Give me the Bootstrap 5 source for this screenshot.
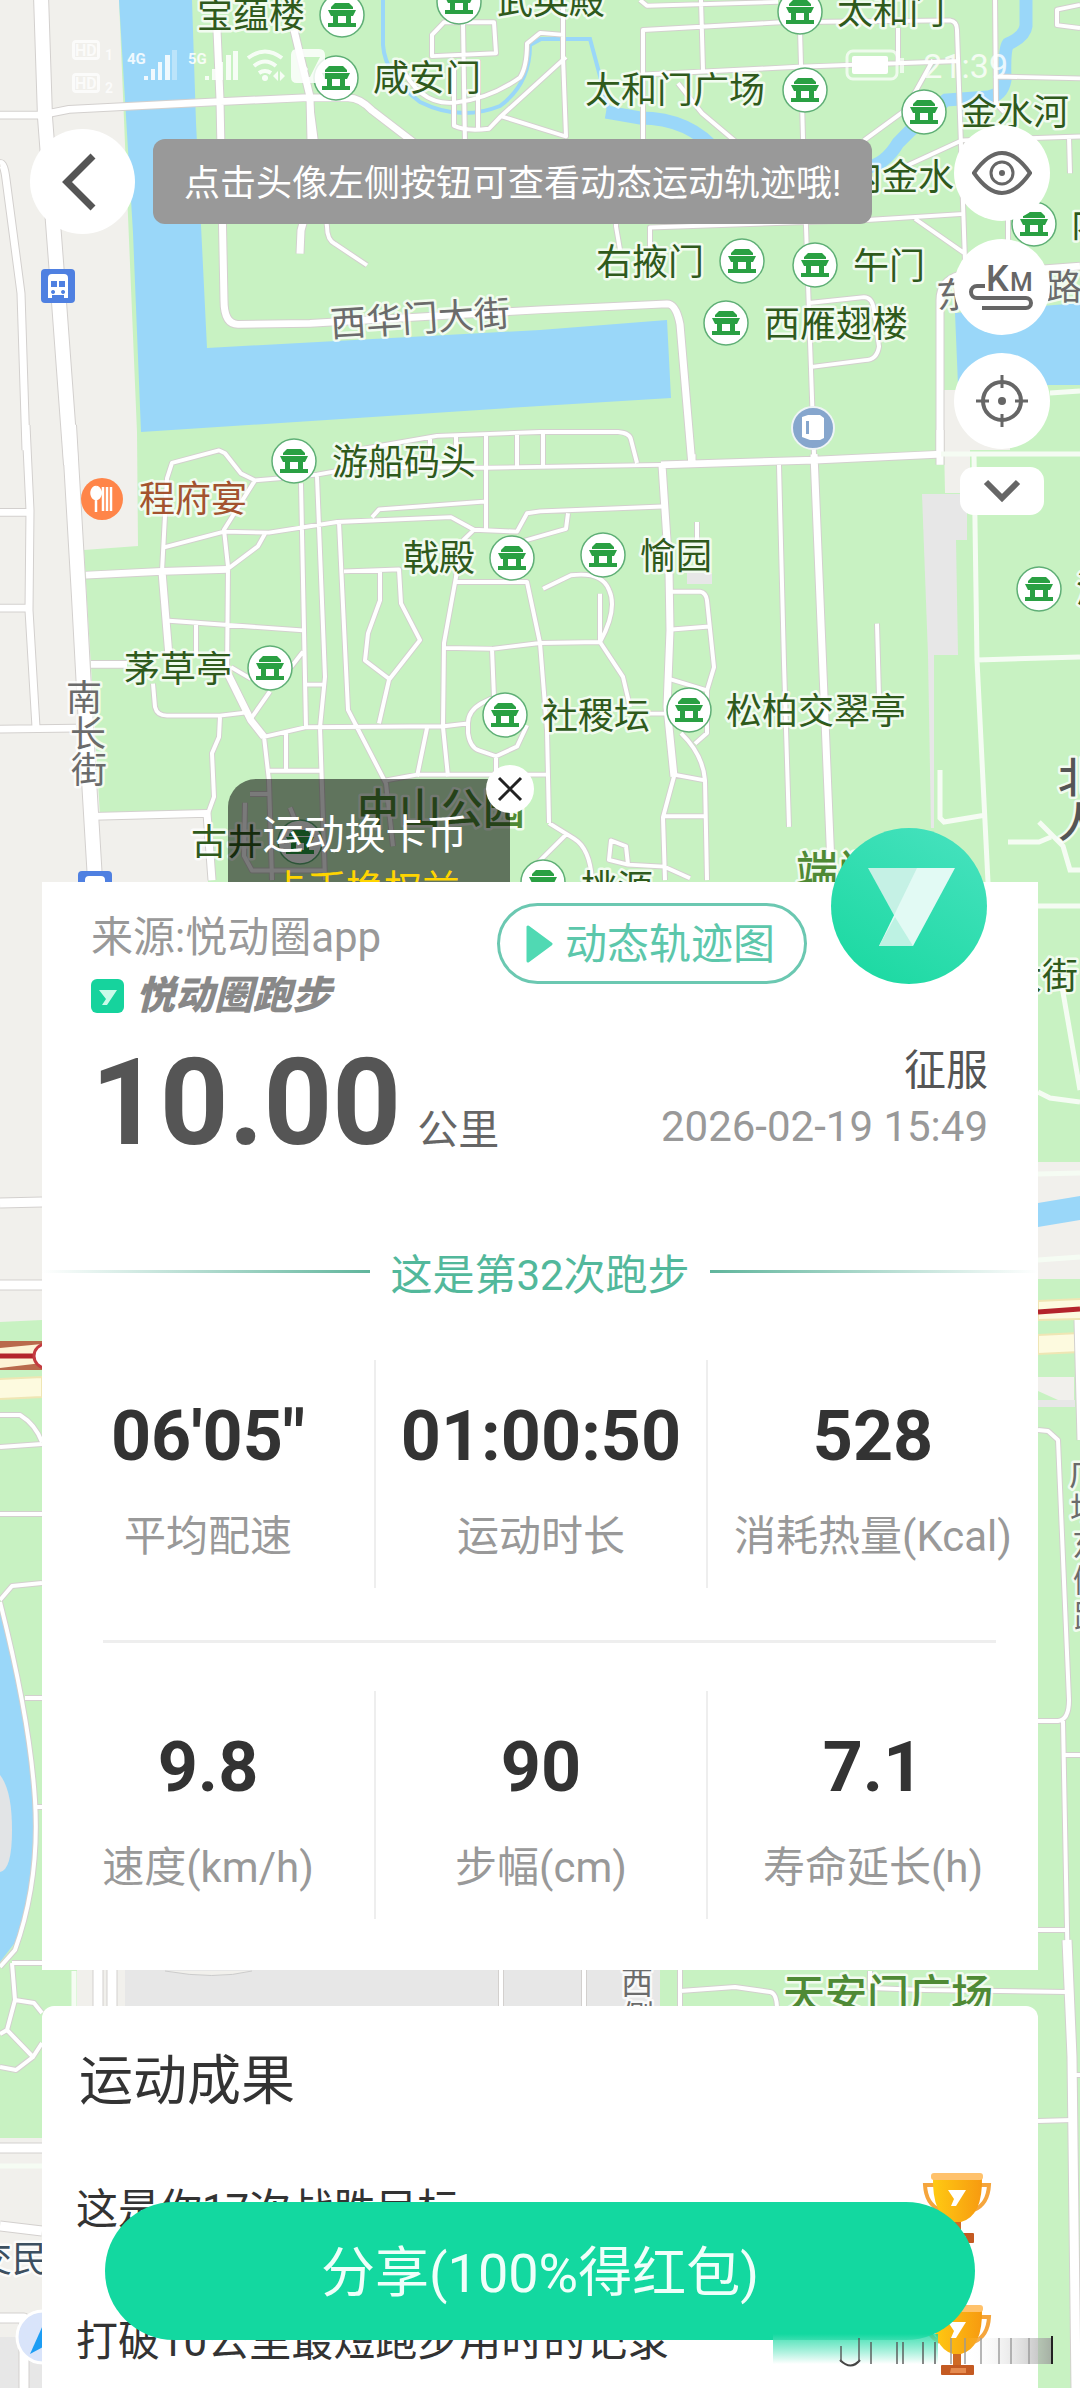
<!DOCTYPE html>
<html lang="zh-CN">
<head>
<meta charset="utf-8">
<meta name="viewport" content="width=device-width, initial-scale=1">
<title>悦动圈跑步</title>
<link href="https://cdn.jsdelivr.net/npm/bootstrap@5.3.0/dist/css/bootstrap.min.css" rel="stylesheet">
<style>
body{font-family:Roboto,"Noto Sans CJK SC",sans-serif;background:#c8f2c2;color:#333;font-size:42px;line-height:60px}
.shell{z-index:0}
.city-map{position:absolute;inset:0;width:100%;height:100%;z-index:-1}
.city-map text{font-family:Roboto,"Noto Sans CJK SC",sans-serif;font-size:36px;fill:#2f5a1c;stroke:#fff;stroke-opacity:.75;stroke-width:5px;paint-order:stroke;stroke-linejoin:round}
.city-map .street{fill:#6b6b6b}
.city-map .lane{font-size:32px;fill:#6b6b6b}
.city-map .area{font-size:42px;font-weight:500;fill:#4f8a35}
.city-map .district{fill:#555}
.city-map .diner{fill:#a3532f}
.city-map .metro{fill:#3c4f60}
.map-zone{min-height:882px}
.status{padding:40px 72px 0;height:125px;color:#fff;font-size:34px}
.status time{line-height:44px;opacity:.8}
.nav-zone{padding:0 30px}
.round-btn{width:96px;height:96px;padding:0;border:0;border-radius:50%;background:#fff;display:flex;align-items:center;justify-content:center}
.back-btn{width:105px;height:105px;margin-top:4px;padding-right:8px}
.tip{background:#999;color:#fff;border-radius:12px;font-size:36px;line-height:54px;padding:18px 31px 13px;margin:14px auto 0 18px;white-space:nowrap}
.tools{gap:18px}
.tools .round-btn:last-child{width:84px;height:48px;border-radius:14px;margin-top:0}
.coin{margin-left:228px;width:282px;height:103px;background:rgba(0,0,0,.52);border-radius:28px 0 0 0;color:#fff;font-size:41px;line-height:60px;padding:26px 8px 0 0;text-align:center;overflow:hidden}
.coin span{display:block}
.coin span+span{color:#ffd500;font-size:38px;line-height:48px}
.coin-close{position:absolute;left:486px;bottom:69px;width:48px;height:48px}
.sheet{margin:0 42px;background:#fff}
.sheet-head{padding:21px 51px 0 49px}
.source{color:#999;line-height:60px;margin-top:5px}
.brand{color:#888;font-size:39px;font-weight:900;font-style:italic;line-height:34px;gap:12px;margin-top:11px}
.replay{height:81px;border:3px solid #6bc8b1;border-radius:41px;background:#fff;color:#5cc7ab;padding:3px 29px 0 25px;gap:12px;margin-right:24px;line-height:60px}
.replay svg{margin-top:-3px}
.avatar{width:156px;height:156px;margin-top:-75px}
.dist-row{padding:30px 50px 0 49px}
.dist{font-size:120px;line-height:120px;font-weight:700;color:#555}
.unit{color:#666;margin-left:16px;font-size:41px}
.who{color:#555;line-height:56px}
.when{color:#999;line-height:56px}
.count{color:#52b89b;gap:20px;margin-top:83px}
.count i{flex:1;height:3px;margin-bottom:10px;background:linear-gradient(90deg,#fff,#60b59c)}
.count i:last-child{background:linear-gradient(90deg,#60b59c,#fff)}
.stat-row{padding:54px 0 52px}
.stat{height:228px;text-align:center;padding-top:34px;white-space:nowrap}
.stat+.stat{border-left:2px solid #eee}
.stat b{display:block;font-size:70px;line-height:84px;color:#333}
.stat span{display:block;color:#999;margin-top:29px}
.rule{height:3px;background:#eee;margin:0 42px 0 61px}
.stat-row+.rule+.stat-row{padding:48px 0 51px}
.results{margin:36px 42px 0;background:#fff;border-radius:12px 12px 0 0;padding:36px 46px 12px 34px}
.results h2{font-size:54px;line-height:80px;margin:0 0 50px 3px;font-weight:400;color:#333}
.award{height:72px;margin-bottom:60px}
.award span{padding-top:4px}
.award:last-child{margin-bottom:0}
.share{position:absolute;left:105px;right:105px;bottom:48px;height:138px;border:0;border-radius:69px;background:#13d8a0;color:#effffa;font-size:54px;padding-top:6px}
.smudge{position:absolute;right:25px;bottom:18px}
</style>
</head>
<body>
<main class="shell position-relative d-flex flex-column min-vh-100 overflow-hidden">

<svg class="city-map" viewBox="0 0 1080 2388" preserveAspectRatio="xMidYMin slice" aria-label="地图">
<defs>
<g id="poi"><circle r="22" fill="#fff" stroke="#5faf76" stroke-width="1.5"/><path d="M-7-12H7L11-8V-6H-11V-8ZM-14-5H14L11 1H9V8H14V12H-14V8H-9V1H-11ZM-4 1V8H4V1Z" fill="#2aa043" fill-rule="evenodd"/></g>
<g id="bus"><rect x="-17" y="-17" width="34" height="34" rx="4" fill="#4f80e1"/><path d="M-10-8q0-4 4-4H6q4 0 4 4V12H6V9H-6V12H-10ZM-7-5V1H-1V-5ZM1-5V1H7V-5ZM-5 4a2 2 0 1 0 .1 0M5 4a2 2 0 1 0 .1 0" fill="#fff" fill-rule="evenodd"/></g>
<g id="roads-north">
<g stroke-width="16"><path d="M41-5 45 121 57 284 71 480"/></g>
<g stroke-width="9"><path d="M0 169Q4 168 6 185L21 303 26 465M0 119H40L69 113 220 105 303 101 348 101Q360 101 372 114L430 160M217 31 220 103 224 310Q224 335 238 335L310 334 540 320 667 314Q676 314 680 335L692 481M294 31 310 100 311 145V200L301 238 300 262M940 480V310Q940 290 960 284L1080 275"/></g>
<g stroke-width="6"><path d="M310 100 327 234Q327 248 335 252L367 274M432 58V36L444 23H494L496 55ZM463 23 465 150M454 62V130Q466 136 489 133L501 120 566 59M478 62V133M400 66Q420 110 455 106T520 80Q527 69 527 45L540 34 564 36M563 0V59L566 141 501 120M640 0 647 6 778 2M643 150V31L781 23 950 21Q957 22 957 31L965 270M701 0 703 72M643 77 798 69 960 63M650 260V235L871 227 964 221M616 150V234L620 258M800 30 803 143 806 234 814 470M898 29V64M933 62 905 114 864 145M678 86 702 117 740 150M995-5 996 107 1004 116M996 79 1080 81M905 172 962 145 1080 141M1069 141 1070 179M1008 225V270M915 226 965 262M1080 5 1057 10V26L1080 29M809 313 864 307Q872 307 874 320L879 358Q877 372 865 372L812 379"/></g>
</g>
<g id="roads-park">
<g stroke-width="16"><path d="M69 425 79 602 88 774 95 895"/></g>
<g stroke-width="9"><path d="M26 425 30 513 29 616 36 737M0 515H30M0 614H30M0 739 76 738M93 829 207 826 212 895M86 580 162 576 227 574M162 576 169 664M91 672H127M227 680 251 730 264 747M661 466 815 461 941 455M662 466 669 575 670 637 667 716 674 788M814 455 831 880M940 430V455M692 455V463"/></g>
<g stroke-width="6"><path d="M255 482 241 475 225 454 219 451 172 464 167 480 162 576M165 551 224 535 269 536 337 525 451 520 474 533 517 535 527 516 540 514 662 509M255 482 224 533 228 571 227 685M227 574 258 550 265 537M251 730 264 747 269 792 272 895M255 482 279 480 317 476 360 468 486 469 661 466M301 485 306 737M317 478 325 685 320 737 325 895M339 525 348 719 386 795 393 860M372 520 379 512 484 504M486 436V532M517 435V468M430 438V468M456 436V468M344 465 348 452 437 436 540 432H618Q630 433 631 440L637 464M543 432V466M169 627 303 637M196 630V664M153 692 155 716Q157 725 167 725H220L245 722M231 675 251 687M251 728 270 700M303 659 291 675M220 726 219 747 212 764 214 809 208 826M264 747 306 737 444 736 468 733M306 693H325M286 742V781M269 782H322M344 576 399 574 401 609 420 647 389 688 379 733M380 576V606L368 640 365 668 389 687M463 544 474 533M458 560 456 582 444 650 443 737 448 788M456 587H527L540 650 547 740 549 836M444 655 492 656 540 650 600 649M492 656 494 706 482 712Q468 720 468 733V743Q470 758 479 761L496 767 517 757 527 735M496 767V788M386 792 417 786 496 786H549M427 738 417 788M568 516 566 532 512 548M543 594 571 580Q602 576 609 595 618 615 600 649L623 685 630 716M600 599V649M671 597H700Q706 598 707 606L714 675 707 699V743L695 754M669 687 707 699M672 636 709 633M681 743Q703 765 705 792L707 895M674 786 705 792M674 788 663 830 665 895M664 829H705M697 525V544M650 723H680M779 466 784 671 789 840M877 630 879 706M549 836 574 852Q590 862 592 895M566 848 530 885M609 874 611 854 626 860 628 879ZM628 879 664 881 690 893M250 806H269M245 815 244 870 252 885H325M290 820 302 850"/></g>
</g>
<g id="roads-south">
<g stroke-width="11"><path d="M0 1203 42 1202M0 1285H42M0 2148H42M0 2226 42 2231M0 2318H24V2388M98 1960V2010M112 1960V2010M1067 1940 1072 2057 1076 2388M1079 1320 1082 1440"/></g>
<g stroke-width="6"><path d="M0 1415H20Q35 1424 42 1442M0 1447 42 1444M0 1514H42M0 1600 12 1586 42 1583M0 1602Q30 1720 35 1800T15 1950L0 1967M25 1698H42M34 1807H42M12 1963H42M12 1963 15 2000 7 2030 33 2057 42 2043M15 2000 34 2003 42 2013M0 2034 7 2030M0 2067 16 2070 33 2057M501 1960V2010M584 1960V2010M680 1960V2010M680 1991 735 1987 770 1992Q777 1993 777 2010M870 1971V1988L925 1990 1067 1992M1038 1430 1048 1431 1058 1440 1069 1700Q1069 1720 1058 1721H1038M1063 1721 1068 1980M1063 1755H1080M1038 1930H1067M1038 2121 1072 2120M1072 2075H1080"/></g>
</g>
<linearGradient id="gold"><stop stop-color="#ffca12"/><stop offset="1" stop-color="#f79a10"/></linearGradient>
<linearGradient id="mint" x1="1" y1="0" x2=".4" y2="1"><stop stop-color="#49e2c0"/><stop offset="1" stop-color="#1fdaa4"/></linearGradient>
</defs>
<rect width="1080" height="2388" fill="#c8f2c2"/>
<path fill="#f1f0ec" d="M0 0H119L137 432 138 546 84 550 100 816 208 812V900H0ZM0 900H42V1320L0 1322ZM0 2138H42V2388H0ZM943 390H1010V450H970V493H945ZM1038 1162H1080V1279H1038ZM1038 1377H1074V1400H1058L1038 1391ZM77 1960H128V2010H77Z"/>
<path fill="#e7e7e7" d="M922 494H967V540H956L958 655H934V828H931L928 655ZM125 1960H660V2010H125ZM0 2337H42V2388H0ZM1038 1400H1075V1407H1038ZM687 573H712V584H687Z"/>
<path fill="#9ad7f9" d="M119 0H192L196 123 207 348 540 330 667 320 671 398 540 406 141 432 133 233ZM955 313 1080 303V385H958ZM1038 1203 1080 1196V1220L1038 1227ZM0 1605Q30 1720 33 1800T17 1940L0 1962Z"/>
<g fill="none" stroke="#9ad7f9"><path stroke-width="4" d="M383 0V45Q385 75 420 102 460 122 500 106 530 84 530 45L541 39H590L600 76 609 110"/><path stroke-width="13" d="M606 112 640 118Q690 118 718 153M1026 0V26Q1025 36 1008 44 1004 50 1005 80 1002 96 988 97L946 100Q920 120 898 143 885 165 865 168"/></g>
<path d="M0 1775Q12 1790 12 1830T0 1872Z" fill="#e2e4e6"/>
<path d="M0 1341H42V1370H0Z" fill="#b9694c"/><path d="M0 1348 42 1344V1363L0 1368Z" fill="#fdf3d6"/>
<path fill="#fdfadf" stroke="#efe6b4" stroke-width="2" d="M-2 1379 42 1377V1397L-2 1399ZM1038 1301 1082 1299V1319L1038 1320ZM1038 1335 1082 1333V1352L1038 1354Z"/>
<path d="M0 1356H42M1038 1312 1080 1309" stroke="#b3242b" stroke-width="5"/><circle cx="46" cy="1356" r="12" fill="#fff" stroke="#c43a40" stroke-width="3"/>
<path d="M165 1971Q215 1980 252 1971" fill="#f1f0ec" stroke="#ccc"/>
<g class="casing" fill="none" stroke="#d3d0ce" stroke-linejoin="round">
<g transform="scale(1 .968)"><use href="#roads-north"/></g>
<g transform="translate(0 13.8) scale(1 .968)"><use href="#roads-park"/></g>
<g><use href="#roads-south"/></g>
</g>
<g fill="none" stroke-linejoin="round" id="network"></g>
<path fill="none" stroke="#f5fcf3" stroke-width="5" d="M974 454 977 660 988 882M977 660 1080 657M941 454H1080M940 770V818L944 822 986 815M1008 842H1039L1051 837M1039 822 1063 846 1070 870H1080M1038 906H1080M1060 975 1080 1090M1038 1092 1050 1098 1080 1102M1038 1174 1080 1173M1038 1260 1080 1257M0 2166H42M74 1971V2007M1050 393 1080 391"/>
<use href="#poi" x="342" y="15"/><text x="197" y="28">宝蕴楼</text>
<use href="#poi" x="459" y="2"/><text x="497" y="14">武英殿</text>
<use href="#poi" x="800" y="12"/><text x="837" y="24">太和门</text>
<use href="#poi" x="336" y="78"/><text x="373" y="91">咸安门</text>
<use href="#poi" x="805" y="90"/><text x="585" y="103">太和门广场</text>
<use href="#poi" x="924" y="112"/><text x="961" y="125">金水河</text>
<text x="846" y="190">内金水</text><use href="#poi" x="1034" y="224"/><text x="1071" y="237">内</text>
<use href="#poi" x="742" y="261"/><text x="596" y="275">右掖门</text>
<use href="#poi" x="815" y="265"/><text x="853" y="279">午门</text>
<use href="#poi" x="726" y="323"/><text x="764" y="337">西雁翅楼</text>
<text class="street" x="937" y="309" transform="rotate(-3 937 309)">东</text><text class="street" x="1046" y="300">路</text>
<text class="street" x="331" y="337" transform="rotate(-3.6 331 337)">西华门大街</text>
<use href="#poi" x="294" y="461"/><text x="332" y="475">游船码头</text>
<circle cx="102" cy="499" r="21" fill="#ff8549"/><path d="M96 487a4.500 6 0 1 0 .1 0M96 496V512M103 487V511M107 487V511M111 487V511" stroke="#fff" stroke-width="2.500" fill="#fff"/>
<text class="diner" x="139" y="512">程府宴</text>
<use href="#poi" x="512" y="558"/><text x="403" y="571">戟殿</text>
<use href="#poi" x="603" y="555"/><text x="640" y="569">愉园</text>
<use href="#poi" x="270" y="668"/><text x="124" y="682">茅草亭</text>
<use href="#poi" x="505" y="715"/><text x="542" y="729">社稷坛</text>
<use href="#poi" x="689" y="710"/><text x="726" y="724">松柏交翠亭</text>
<use href="#poi" x="1039" y="589"/><text x="1076" y="603">湖</text>
<text class="street" x="66" y="711">南</text><text class="street" x="70" y="747">长</text><text class="street" x="71" y="783">街</text>
<use href="#bus" x="58" y="286"/><use href="#bus" x="95" y="888"/>
<use href="#poi" x="300" y="842"/><text x="191" y="855">古井</text>
<text class="area" x="357" y="824">中山公园</text>
<use href="#poi" x="543" y="882"/><text x="581" y="901">桃源</text>
<text class="area" x="796" y="886">端门</text>
<text class="area district" x="1058" y="793">北</text><text class="area district" x="1058" y="838">人</text>
<circle cx="813" cy="428" r="21" fill="#86a6cd" stroke="#eef4f6" stroke-width="2"/><path d="M802 417 808 415H820L824 418V438L820 440H810L802 437ZM806 421V434H809V421Z" fill="#fff" fill-rule="evenodd"/>
<text x="1006" y="989">大街</text><text class="area" x="783" y="2010">天安门广场</text>
<text class="lane" x="621" y="1994">西</text><text class="lane" x="622" y="2028">侧</text>
<text class="lane" x="1069" y="1485">广</text><text class="lane" x="1070" y="1520">场</text><text class="lane" x="1072" y="1556">东</text><text class="lane" x="1073" y="1592">侧</text><text class="lane" x="1074" y="1628">路</text>
<text class="metro" x="-24" y="2272">交民</text>
<circle cx="43" cy="2337" r="26" fill="#d9e4fa" stroke="#fff" stroke-width="3"/><path d="M43 2325 30 2354 43 2347Z" fill="#1c9df4"/>
</svg>

<section class="map-zone position-relative d-flex flex-column">
<header class="status d-flex align-items-start">
<svg width="254" height="54" fill="#fff" opacity=".85" role="img" aria-label="手机信号">
<g opacity=".9" font-family="Roboto" font-weight="700"><path fill-rule="evenodd" d="M4 0H24q4 0 4 4V16q0 4-4 4H4q-4 0-4-4V4q0-4 4-4ZM3 3V17H25V3ZM4 33H24q4 0 4 4V49q0 4-4 4H4q-4 0-4-4V37q0-4 4-4ZM3 36V50H25V36Z"/><text x="3" y="16" font-size="16">HD</text><text x="3" y="49" font-size="16">HD</text><text x="33" y="20" font-size="14">1</text><text x="33" y="53" font-size="14">2</text></g>
<text x="55" y="24" font-size="15" font-family="Roboto" font-weight="700">4G</text><path d="M72 36h4v4h-4ZM79 29h4v11h-4ZM86 22h4v18h-4ZM93 15h5v25h-5Z"/><path opacity=".4" d="M100 10h5v30h-5Z"/>
<text x="116" y="24" font-size="15" font-family="Roboto" font-weight="700">5G</text><path d="M133 36h4v4h-4ZM140 29h4v11h-4ZM147 22h4v18h-4ZM154 15h5v25h-5ZM161 11h5v29h-5Z"/>
<g fill="none" stroke="#fff" stroke-width="4"><path d="M176 18Q193 5 210 18M182 26Q193 17 204 26M187 33Q193 29 199 33"/></g><circle cx="193" cy="38" r="3"/><path d="M206 31V41L201 36ZM208 31V41L213 36Z"/>
<path fill-rule="evenodd" d="M225 9H247q6 0 6 6V37q0 6-6 6H225q-6 0-6-6V15q0-6 6-6ZM227 17 236 29 232 37H238L248 17Z"/></svg>
<svg class="ms-auto me-3" width="62" height="44" role="img" aria-label="电量"><rect x="2" y="11" width="50" height="28" rx="6" fill="none" stroke="#fff" stroke-width="3" opacity=".7"/><rect x="7" y="16" width="36" height="18" rx="2" fill="#fff"/><path d="M57 18V33" stroke="#fff" stroke-width="4" opacity=".7"/></svg>
<time class="pt-1">21:39</time>
</header>
<div class="nav-zone d-flex align-items-start">
<button class="round-btn back-btn" type="button" aria-label="返回"><svg width="38" height="60" fill="none" stroke="#555" stroke-width="7"><path d="M33 4 7 30 33 56"/></svg></button>
<div class="tip" role="status">点击头像左侧按钮可查看动态运动轨迹哦!</div>
<div class="tools d-flex flex-column align-items-center">
<button class="round-btn" type="button" aria-label="显示"><svg width="60" height="50" fill="none" stroke="#666" stroke-width="4"><path d="M2 25Q30-15 58 25 30 65 2 25Z"/><circle cx="30" cy="25" r="11" stroke-width="3"/><circle cx="30" cy="25" r="3" fill="#666" stroke="none"/></svg></button>
<button class="round-btn" type="button" aria-label="公里标记"><svg width="68" height="54" fill="none" stroke="#666" stroke-width="4"><path d="M17 26H9a6 6 0 0 0 0 12H58a5 5 0 0 1 0 10H14"/><g stroke="none" fill="#666" font-family="Roboto" font-weight="500"><text x="18" y="31" font-size="36">K</text><text x="42" y="31" font-size="26">M</text></g></svg></button>
<button class="round-btn" type="button" aria-label="定位"><svg width="56" height="56" fill="none" stroke="#666" stroke-width="4"><circle cx="28" cy="28" r="19"/><path d="M28 2V15M28 41V54M2 28H15M41 28H54" stroke-width="3"/><circle cx="28" cy="28" r="4" fill="#666" stroke="none"/></svg></button>
<button class="round-btn" type="button" aria-label="展开"><svg width="40" height="26" fill="none" stroke="#666" stroke-width="6"><path d="M4 4 20 20 36 4"/></svg></button>
</div>
</div>
<aside class="coin mt-auto"><span>运动换卡币</span><span>卡币换权益</span></aside>
<button class="round-btn coin-close" type="button" aria-label="关闭"><svg width="26" height="26" stroke="#222" stroke-width="3"><path d="M2 2 24 24M24 2 2 24"/></svg></button>
</section>

<section class="sheet position-relative">
<div class="sheet-head d-flex align-items-start">
<div class="me-auto"><div class="source">来源:悦动圈app</div>
<div class="brand d-flex align-items-center"><svg width="33" height="34"><rect width="33" height="34" rx="6" fill="#16d39d"/><path d="M8 11H26L16 26H11L15 20Z" fill="#c9fbe9"/></svg>悦动圈跑步</div></div>
<button class="replay d-flex align-items-center" type="button"><svg width="28" height="40"><path d="M3 3V37L26 20Z" fill="#50d9b3" stroke="#50d9b3" stroke-width="3" stroke-linejoin="round"/></svg>动态轨迹图</button>
<svg class="avatar" viewBox="0 0 156 156" role="img" aria-label="头像"><circle cx="78" cy="78" r="78" fill="url(#mint)"/><path d="M37 40H88L64 89Z" fill="#c5f1e5"/><path d="M86 40H124L82 118H48Z" fill="#e2faf4"/><path d="M64 89 82 118H48Z" fill="#bdf2e3"/></svg>
</div>
<div class="dist-row d-flex align-items-start">
<div class="me-auto d-flex align-items-baseline"><span class="dist">10.00</span><span class="unit">公里</span></div>
<div class="text-end"><div class="who">征服</div><div class="when">2026-02-19 15:49</div></div>
</div>
<div class="count d-flex align-items-center"><i></i><span>这是第32次跑步</span><i></i></div>
<div class="stat-row row g-0"><div class="stat col-4"><b>06'05"</b><span>平均配速</span></div><div class="stat col-4"><b>01:00:50</b><span>运动时长</span></div><div class="stat col-4"><b>528</b><span>消耗热量(Kcal)</span></div></div>
<div class="rule"></div>
<div class="stat-row row g-0"><div class="stat col-4"><b>9.8</b><span>速度(km/h)</span></div><div class="stat col-4"><b>90</b><span>步幅(cm)</span></div><div class="stat col-4"><b>7.1</b><span>寿命延长(h)</span></div></div>
</section>

<section class="results flex-grow-1">
<h2>运动成果</h2>
<div class="award d-flex align-items-center justify-content-between"><span>这是你17次战胜目标</span>
<svg width="70" height="72" role="img" aria-label="奖杯"><g id="cup"><path d="M12 13H3Q4 32 18 38M57 13H67Q66 32 52 38" fill="none" stroke="#f5a53c" stroke-width="4"/><path d="M11 5H60Q61 44 39 50V60H31V50Q10 44 11 5Z" fill="url(#gold)"/><path d="M31 50H39V62H31Z" fill="#cf6a25"/><rect x="9" y="1" width="52" height="7" rx="3" fill="#ffc26c"/><path d="M26 18H44L34 34H29L32 27Z" fill="#fff"/><rect x="19" y="61" width="33" height="10" rx="1" fill="#c45a22"/><path d="M29 64H44V69H28Z" fill="#e58a4f"/></g></svg></div>
<div class="award d-flex align-items-center justify-content-between"><span>打破10公里最短跑步用时的记录</span>
<svg width="70" height="72" role="img" aria-label="奖杯"><use href="#cup"/></svg></div>
</section>

<button class="share" type="button">分享(100%得红包)</button>
<svg class="smudge" width="284" height="36" aria-hidden="true"><defs><linearGradient id="fade" x2="0" y2="1"><stop stop-color="#13d8a0" stop-opacity=".8"/><stop offset="1" stop-color="#fff" stop-opacity=".9"/></linearGradient><linearGradient id="greyfade"><stop stop-color="#fff" stop-opacity="0"/><stop offset="1" stop-color="#999"/></linearGradient></defs><rect x="2" y="0" width="165" height="30" fill="url(#fade)"/><rect x="195" y="4" width="86" height="26" fill="url(#greyfade)" opacity=".75"/><path d="M69 26Q80 37 89 26" fill="none" stroke="#444" stroke-width="2"/><path d="M70 12V28M88 4V28M100 8V30M126 8V30M132 8V30M152 8V30M164 8V30" fill="none" stroke="#555" stroke-width="2" opacity=".7"/><path d="M180 4V30M194 4V30M210 4V30M228 4V30M240 4V30M258 4V30" stroke="#999" stroke-width="2" opacity=".7"/><path d="M281 2V30" stroke="#222" stroke-width="2"/></svg>
</main>
<script>
// Second pass of the road network: a thinner white line over each grey casing.
const net = document.getElementById('network');
document.querySelectorAll('.casing use').forEach(u => {
  const src = document.querySelector(u.getAttribute('href')).cloneNode(true);
  src.removeAttribute('id');
  src.querySelectorAll('g').forEach(g => g.setAttribute('stroke-width', g.getAttribute('stroke-width') - 2));
  src.setAttribute('stroke', '#fff');
  if (u.parentNode.hasAttribute('transform')) src.setAttribute('transform', u.parentNode.getAttribute('transform'));
  net.appendChild(src);
});
</script>
<script src="https://cdn.jsdelivr.net/npm/bootstrap@5.3.0/dist/js/bootstrap.bundle.min.js"></script>
</body>
</html>
